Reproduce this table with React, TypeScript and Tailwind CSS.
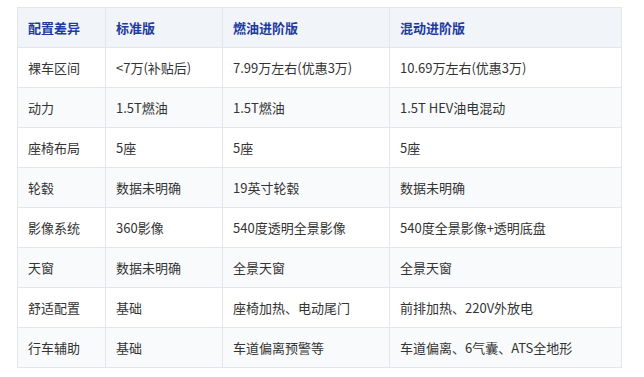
import React from 'react';

const headers = ['配置差异', '标准版', '燃油进阶版', '混动进阶版'];

const rows: string[][] = [
  ['裸车区间', '<7万(补贴后)', '7.99万左右(优惠3万)', '10.69万左右(优惠3万)'],
  ['动力', '1.5T燃油', '1.5T燃油', '1.5T HEV油电混动'],
  ['座椅布局', '5座', '5座', '5座'],
  ['轮毂', '数据未明确', '19英寸轮毂', '数据未明确'],
  ['影像系统', '360影像', '540度透明全景影像', '540度全景影像+透明底盘'],
  ['天窗', '数据未明确', '全景天窗', '全景天窗'],
  ['舒适配置', '基础', '座椅加热、电动尾门', '前排加热、220V外放电'],
  ['行车辅助', '基础', '车道偏离预警等', '车道偏离、6气囊、ATS全地形'],
];

const colWidths = ['w-[88px]', 'w-[117px]', 'w-[167px]', 'w-[232px]'];

export default function App() {
  return (
    <div className="w-[644px] h-[377px] bg-white pt-[7px] pl-[17px] font-['Microsoft_YaHei','Noto_Sans_CJK_SC',sans-serif] text-[13px]">
      <table className="border-collapse table-fixed w-[604px]">
        <thead>
          <tr className="h-[40px] bg-[#f1f5fa]">
            {headers.map((h, i) => (
              <th
                key={h}
                className={`${colWidths[i]} border border-[#e3e6eb] px-[10px] text-left font-bold text-[#1e3a9e]`}
              >
                {h}
              </th>
            ))}
          </tr>
        </thead>
        <tbody>
          {rows.map((r, ri) => (
            <tr key={ri} className={`h-[40px] ${ri % 2 === 1 ? 'bg-[#f9fafb]' : 'bg-white'}`}>
              {r.map((c, ci) => (
                <td key={ci} className="border border-[#e3e6eb] px-[10px] text-left text-[#333333] whitespace-nowrap">
                  {c}
                </td>
              ))}
            </tr>
          ))}
        </tbody>
      </table>
    </div>
  );
}
